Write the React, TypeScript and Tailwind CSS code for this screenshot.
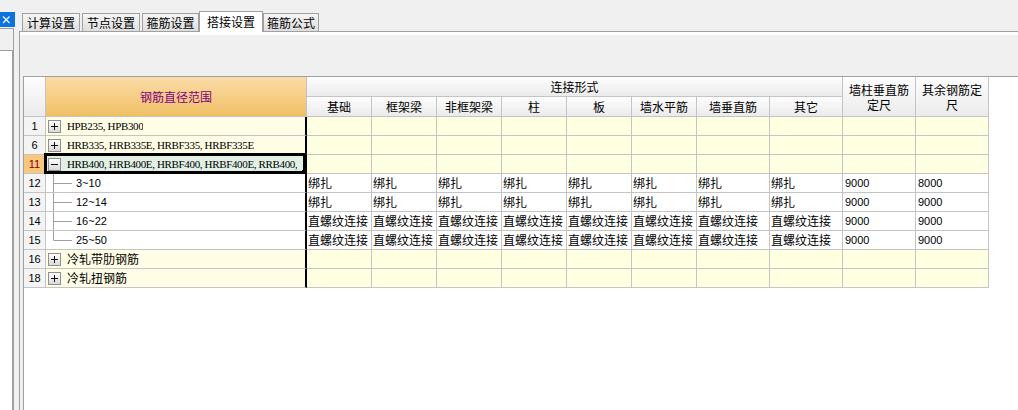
import React from 'react';

type Row = {
  n: string;
  kind: 'group' | 'child';
  minus?: boolean;
  label: string;
  latin?: boolean;
  selected?: boolean;
  last?: boolean;
  vals?: string[];
};

const B8 = Array(8).fill('绑扎');
const Z8 = Array(8).fill('直螺纹连接');

const rows: Row[] = [
  { n: '1', kind: 'group', label: 'HPB235, HPB300', latin: true },
  { n: '6', kind: 'group', label: 'HRB335, HRB335E, HRBF335, HRBF335E', latin: true },
  { n: '11', kind: 'group', minus: true, label: 'HRB400, HRB400E, HRBF400, HRBF400E, RRB400,', latin: true, selected: true },
  { n: '12', kind: 'child', label: '3~10', vals: [...B8, '9000', '8000'] },
  { n: '13', kind: 'child', label: '12~14', vals: [...B8, '9000', '9000'] },
  { n: '14', kind: 'child', label: '16~22', vals: [...Z8, '9000', '9000'] },
  { n: '15', kind: 'child', label: '25~50', vals: [...Z8, '9000', '9000'], last: true },
  { n: '16', kind: 'group', label: '冷轧带肋钢筋' },
  { n: '18', kind: 'group', label: '冷轧扭钢筋' },
];

const subs = ['基础', '框架梁', '非框架梁', '柱', '板', '墙水平筋', '墙垂直筋', '其它'];

function Box({ minus }: { minus?: boolean }) {
  const id = minus ? 'gm' : 'gp';
  return (
    <svg width="13" height="13" viewBox="0 0 13 13" className="shrink-0">
      <defs>
        <linearGradient id={id} x1="0" y1="0" x2="0" y2="1">
          <stop offset="0" stopColor="#ffffff" />
          <stop offset="1" stopColor="#d8d8d8" />
        </linearGradient>
      </defs>
      <rect x="0.5" y="0.5" width="12" height="12" fill={`url(#${id})`} stroke="#8f8f8f" />
      <rect x="3" y="6" width="7" height="1" fill="#111" />
      {!minus && <rect x="6" y="3" width="1" height="7" fill="#111" />}
    </svg>
  );
}

function Tab({ label, cls, active }: { label: string; cls: string; active?: boolean }) {
  return active ? (
    <div
      className={`${cls} relative z-10 -mb-px flex h-[21px] items-center justify-center border border-b-0 border-[#a0a0a0] bg-white text-[12px] text-black`}
    >
      {label}
    </div>
  ) : (
    <div
      className={`${cls} flex h-[18px] items-center justify-center border border-b-0 border-[#a0a0a0] bg-linear-to-b from-[#f6f6f6] to-[#dedede] pt-px text-[12px] text-black`}
    >
      {label}
    </div>
  );
}

const hdr =
  'flex items-center justify-center border-r border-b border-[#c4c4c4] bg-linear-to-b from-[#fdfdfd] to-[#ebebeb] text-[12px] text-black';

function DataRow({ r }: { r: Row }) {
  const isGroup = r.kind === 'group';
  const cellBg = isGroup ? 'bg-[#ffffe1]' : 'bg-white';
  return (
    <>
      <div
        className={
          r.selected
            ? "flex items-center justify-center border-r border-b border-[#c4c4c4] bg-[#f8c67f] font-['Liberation_Sans',sans-serif] text-[11px] text-[#800000]"
            : "flex items-center justify-center border-r border-b border-[#c4c4c4] bg-[#f4f4f4] font-['Liberation_Sans',sans-serif] text-[11px] text-black"
        }
      >
        {r.n}
      </div>
      {isGroup ? (
        <div
          className={
            r.selected
              ? 'relative flex items-center overflow-visible whitespace-nowrap border-r-2 border-b border-r-black border-b-[#c4c4c4] bg-[#e1efe5] pl-[2px]'
              : 'relative flex items-center overflow-hidden whitespace-nowrap border-r-2 border-b border-r-black border-b-[#c4c4c4] bg-[#fffde6] pl-[2px]'
          }
        >
          <Box minus={r.minus} />
          <span
            className={
              r.latin
                ? "ml-[6px] overflow-hidden font-['Liberation_Serif','Noto_Sans_CJK_SC',serif] text-[11px] tracking-[-0.35px] text-black"
                : "ml-[6px] font-['Noto_Sans_CJK_SC',sans-serif] text-[12px] text-black"
            }
          >
            {r.label}
          </span>
          {r.selected && (
            <div className="pointer-events-none absolute top-[-2px] right-[-1px] bottom-[-1px] left-[-2px] z-10 border-[3px] border-black">
              <div className="absolute right-[-4px] bottom-[-3px] h-[4px] w-[5px] bg-black" />
            </div>
          )}
        </div>
      ) : (
        <div className="flex items-stretch overflow-hidden whitespace-nowrap border-r-2 border-b border-r-black border-b-[#c4c4c4] bg-white">
          <div className="w-[7px] shrink-0" />
          <div className="flex w-[19px] shrink-0 flex-col">
            <div className="flex-1 border-l border-[#a0a0a0]" />
            <div
              className={
                r.last ? 'flex-1 border-t border-l border-t-[#a0a0a0] border-l-transparent' : 'flex-1 border-t border-l border-[#a0a0a0]'
              }
            />
          </div>
          <span className="ml-[4px] flex items-center font-['Liberation_Sans',sans-serif] text-[11px] text-black">
            {r.label}
          </span>
        </div>
      )}
      {Array.from({ length: 10 }).map((_, i) => {
        const v = r.vals ? r.vals[i] : '';
        const num = /^\d+$/.test(v);
        return (
          <div
            key={i}
            className={`${cellBg} flex items-center overflow-hidden whitespace-nowrap border-r border-b border-[#c4c4c4] ${
              num ? "pl-[2px] font-['Liberation_Sans',sans-serif] text-[11px]" : 'pl-[1px] text-[12px]'
            } text-black`}
          >
            {v}
          </div>
        );
      })}
    </>
  );
}

export default function App() {
  return (
    <div className="flex h-[410px] w-[1018px] overflow-hidden bg-[#f0f0f0] font-['Noto_Sans_CJK_SC',sans-serif] text-black">
      {/* left strip */}
      <div className="flex w-[19px] shrink-0 flex-col">
        <div className="h-[12px] shrink-0" />
        <div className="flex h-[15px] w-[15px] shrink-0 bg-[#0b72de]">
          <svg width="15" height="15" viewBox="0 0 15 15">
            <path d="M3 4.5 L9.5 11 M9.5 4.5 L3 11" stroke="#fff" strokeWidth="1.1" fill="none" />
          </svg>
        </div>
        <div className="h-[1px] shrink-0" />
        <div className="h-[23px] w-[14px] shrink-0 border-t border-r border-b border-[#a0a0a0] bg-[#f0f0f0]" />
        <div className="w-[14px] flex-1 border-r-2 border-[#a0a0a0] bg-white" />
      </div>

      {/* right area */}
      <div className="flex min-w-0 flex-1 flex-col">
        <div className="flex h-[31px] shrink-0 items-end pl-[3px]">
          <Tab label="计算设置" cls="w-[58px]" />
          <Tab label="节点设置" cls="ml-[2px] w-[58px]" />
          <Tab label="箍筋设置" cls="ml-[2px] w-[57px]" />
          <Tab label="搭接设置" cls="w-[64px]" active />
          <Tab label="箍筋公式" cls="w-[56px]" />
        </div>
        <div className="flex min-h-0 flex-1 flex-col border-t border-l border-[#a0a0a0] bg-[#f0f0f0]">
          <div className="h-[3px] shrink-0 bg-white" />
          <div className="h-[41px] shrink-0" />
          <div className="ml-[3px] flex-1 overflow-hidden border-t border-l border-[#a0a0a0] bg-white">
            <div className="grid w-max grid-cols-[22px_261px_repeat(6,65px)_repeat(4,73px)] grid-rows-[20px_20px_repeat(9,19px)]">
              <div className={`row-span-2 ${hdr}`} />
              <div className="row-span-2 flex items-center justify-center border-r border-b border-[#c4c4c4] bg-linear-to-b from-[#fbdca7] to-[#f0bf62] text-[12px] text-[#800080]">
                钢筋直径范围
              </div>
              <div className={`col-span-8 ${hdr}`}>连接形式</div>
              <div className={`row-span-2 ${hdr} flex-col text-center leading-[15px]`}>
                <span>墙柱垂直筋</span>
                <span>定尺</span>
              </div>
              <div className={`row-span-2 ${hdr} flex-col text-center leading-[15px]`}>
                <span>其余钢筋定</span>
                <span>尺</span>
              </div>
              {subs.map((s) => (
                <div key={s} className={hdr}>
                  {s}
                </div>
              ))}
              {rows.map((r) => (
                <DataRow key={r.n} r={r} />
              ))}
            </div>
          </div>
        </div>
      </div>
    </div>
  );
}
